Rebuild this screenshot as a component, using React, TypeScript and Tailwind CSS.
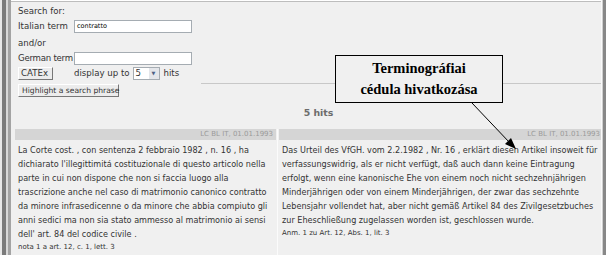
import { FC } from 'react'

const leftLines = [
  'La Corte cost. , con sentenza 2 febbraio 1982 , n. 16 , ha',
  "dichiarato l'illegittimitá costituzionale di questo articolo nella",
  'parte in cui non dispone che non si faccia luogo alla',
  'trascrizione anche nel caso di matrimonio canonico contratto',
  'da minore infrasedicenne o da minore che abbia compiuto gli',
  'anni sedici ma non sia stato ammesso al matrimonio ai sensi',
  "dell' art. 84 del codice civile .",
]

const rightLines = [
  'Das Urteil des VfGH. vom 2.2.1982 , Nr. 16 , erklärt diesen Artikel insoweit für',
  'verfassungswidrig, als er nicht verfügt, daß auch dann keine Eintragung',
  'erfolgt, wenn eine kanonische Ehe von einem noch nicht sechzehnjährigen',
  'Minderjährigen oder von einem Minderjährigen, der zwar das sechzehnte',
  'Lebensjahr vollendet hat, aber nicht gemäß Artikel 84 des Zivilgesetzbuches',
  'zur Eheschließung zugelassen worden ist, geschlossen wurde.',
]

const Cell: FC<{ lines: string[]; note: string }> = ({ lines, note }) => (
  <div className="pl-[3px] pt-[3px] text-[#333] leading-[14px] text-[8.1px]">
    {lines.map((l) => (
      <div key={l} className="whitespace-nowrap">
        {l}
      </div>
    ))}
    <div className="whitespace-nowrap text-[7px] leading-[12px]">{note}</div>
  </div>
)

const App: FC = () => (
  <div
    className="relative w-[610px] h-[255px] bg-white flex overflow-hidden"
    style={{ fontFamily: '"DejaVu Sans", Verdana, sans-serif' }}
  >
    {/* window frame, left */}
    <div className="w-[2px] bg-[#e8e8e8] shrink-0" />
    <div className="w-[4px] bg-[#7b7b7b] shrink-0" />
    <div className="w-[2px] bg-[#d8d8d8] shrink-0" />
    <div className="w-[3px] bg-[#a3a3a3] shrink-0" />

    <div className="flex flex-col w-[590px] shrink-0 bg-[#f0f0f0] border-t border-t-[#bdbdbd] mt-px">
      {/* search form */}
      <div className="flex shrink-0">
        <div className="pl-[7px] pt-[2px] text-[#333] text-[8.6px] w-[190px]">
          <div className="h-[14px] leading-[14px]">Search for:</div>
          <div className="flex items-center h-[16px]">
            <span className="w-[56px] whitespace-nowrap">Italian term</span>
            <div className="w-[118px] h-[13px] bg-white border border-[#a5acb2] text-[6.5px] leading-[11px] pl-[2px] text-black">
              contratto
            </div>
          </div>
          <div className="h-[16px] leading-[16px] mt-[1px]">and/or</div>
          <div className="flex items-center h-[15px]">
            <span className="w-[56px] whitespace-nowrap tracking-[-0.25px]">German term</span>
            <div className="w-[118px] h-[13px] bg-white border border-[#a5acb2]" />
          </div>
          <div className="flex items-center h-[15px]">
            <div className="w-[35px] h-[13px] border border-[#fff] border-r-[#777] border-b-[#777] bg-[#ececec] leading-[11px] pl-[2px]">
              CATEx
            </div>
            <span className="ml-[21px] whitespace-nowrap">display up to</span>
            <div className="ml-[3px] w-[27px] h-[13px] bg-white border border-[#a5acb2] flex items-center justify-between pl-[2px]">
              <span className="leading-[11px]">5</span>
              <span className="w-[10px] h-[11px] bg-[#e4e6ea] text-[5px] leading-[11px] text-center text-[#4d6185]">
                ▼
              </span>
            </div>
            <span className="ml-[4px]">hits</span>
          </div>
          <div className="mt-[3px] w-[101px] h-[13px] border border-[#fff] border-r-[#777] border-b-[#777] bg-[#ececec] text-[7.6px] leading-[11px] pl-[3px] whitespace-nowrap">
            Highlight a search phrase
          </div>
        </div>
        <div className="flex-1 pt-[81px]">
          <div className="h-px bg-[#c8c8c8]" />
        </div>
      </div>

      {/* hits */}
      <div className="h-[32px] shrink-0 flex items-center justify-center pl-[25px] text-[9.4px] font-bold text-[#6c6c6c]">
        5 hits
      </div>

      {/* results table */}
      <div className="flex pl-[4px] flex-1 min-h-0">
        <div className="w-[261px] flex flex-col shrink-0">
          <div className="h-[11px] shrink-0 bg-[#d5d5d5] text-right pr-[3px] text-[7px] leading-[11px] text-[#9a9a9a]">
            LC BL IT, 01.01.1993
          </div>
          <Cell lines={leftLines} note="nota 1 a art. 12, c. 1, lett. 3" />
        </div>
        <div className="w-[3px] flex shrink-0">
          <div className="w-px" />
          <div className="w-px bg-[#fbfbfb]" />
        </div>
        <div className="flex-1 flex flex-col">
          <div className="h-[11px] shrink-0 bg-[#d5d5d5] text-right pr-[1px] text-[7px] leading-[11px] text-[#9a9a9a]">
            LC BL IT, 01.01.1993
          </div>
          <Cell lines={rightLines} note="Anm. 1 zu Art. 12, Abs. 1, lit. 3" />
        </div>
      </div>
    </div>

    {/* window frame, right */}
    <div className="w-px bg-[#fafafa] shrink-0" />
    <div className="w-px bg-[#d0d0d0] shrink-0" />
    <div className="w-[3px] bg-[#888] shrink-0" />
    <div className="flex-1 bg-white" />

    {/* annotation callout */}
    <div
      className="absolute left-[335px] top-[55px] w-[168px] h-[48px] border border-black bg-[#f0f0f0] flex flex-col items-center justify-center text-[14.5px] font-bold leading-[21px] text-black"
      style={{ fontFamily: '"Liberation Serif", "Times New Roman", serif' }}
    >
      <div>Terminográfiai</div>
      <div>cédula hivatkozása</div>
    </div>
    <svg className="absolute left-0 top-0" width="610" height="255">
      <line x1="472" y1="103" x2="510" y2="143" stroke="black" strokeWidth="1" />
      <polygon points="516,149 505,144 511,138" fill="black" />
    </svg>
  </div>
)

export default App
